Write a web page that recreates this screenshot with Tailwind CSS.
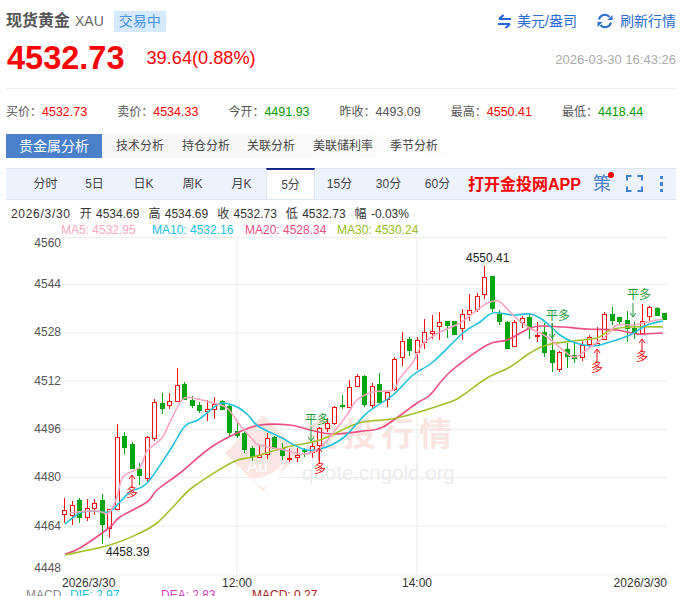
<!DOCTYPE html>
<html lang="zh-CN">
<head>
  <meta charset="UTF-8" />
  <title>现货黄金 XAU</title>
  <script src="https://cdn.jsdelivr.net/npm/@tailwindcss/browser@4"></script>
</head>
<body class="bg-white font-['Liberation_Sans','Noto_Sans_CJK_SC',sans-serif] text-[#555]">
<div class="h-[596px] w-[683px] overflow-hidden">

  <!-- cabecalho -->
  <div class="flex h-[42px] items-center pl-[6px] pr-[7px]">
    <span class="text-base font-bold text-[#555]">现货黄金</span>
    <span class="ml-[5px] text-sm text-[#666]">XAU</span>
    <span class="ml-[10px] flex h-[21px] w-[52px] items-center justify-center bg-[#d6e9fd] text-sm text-[#4a90e2]">交易中</span>
    <div class="ml-auto flex items-center text-sm text-[#2a6ccf]">
      <svg class="mr-[5px] size-[15px]" viewBox="0 0 15 15" fill="none" stroke="#2466d6" stroke-width="2.2">
        <path d="M14 5H2M6.5 1 2 5" />
        <path d="M1 10h12M8.5 14l4.5-4" />
      </svg>
      <span>美元/盎司</span>
      <svg class="ml-[20px] mr-[7px] size-[16px]" viewBox="0 0 16 16" fill="none" stroke="#2a6ccf" stroke-width="2">
        <path d="M2 6.5A6 6 0 0 1 12.5 4" />
        <path d="M14 9.5A6 6 0 0 1 3.5 12" />
        <path d="M15.5 2v5h-5zM.5 14V9h5z" fill="#2a6ccf" stroke="none" />
      </svg>
      <span>刷新行情</span>
    </div>
  </div>

  <!-- preco -->
  <div class="mx-[6px] mr-[7px] flex h-[47px] items-center border-b border-[#eee] pb-[13px] pl-px">
    <span class="text-[32.5px] leading-none font-bold text-[#f00]">4532.73</span>
    <span class="ml-[22px] text-[18.2px] text-[#f00]">39.64(0.88%)</span>
    <span class="mt-[2px] ml-auto text-[13px] text-[#aaa]">2026-03-30 16:43:26</span>
  </div>

  <div class="grid h-[44px] grid-cols-[repeat(6,111.2px)] items-center pl-[6px] pt-[2px] text-xs">
    <div>买价：<span class="text-[12.5px] text-[#f00]">4532.73</span></div>
    <div>卖价：<span class="text-[12.5px] text-[#f00]">4534.33</span></div>
    <div>今开：<span class="text-[12.5px] text-[#090]">4491.93</span></div>
    <div>昨收：<span class="text-[12.5px] text-[#555]">4493.09</span></div>
    <div>最高：<span class="text-[12.5px] text-[#f00]">4550.41</span></div>
    <div>最低：<span class="text-[12.5px] text-[#090]">4418.44</span></div>
  </div>

  <!-- abas analise -->
  <div class="mt-[1px] ml-[6px] flex h-[24px] w-[470px] items-center bg-gradient-to-r from-[#f7f7f7] via-[#f7f7f7] to-white text-xs text-[#444]">
    <span class="flex h-full w-[96px] items-center justify-center bg-[#4a7fc9] text-sm text-white">贵金属分析</span>
    <span class="ml-[14px]">技术分析</span>
    <span class="ml-[18px]">持仓分析</span>
    <span class="ml-[17px]">关联分析</span>
    <span class="ml-[18px]">美联储利率</span>
    <span class="ml-[17px]">季节分析</span>
  </div>

  <!-- barra do grafico -->
  <div class="mt-[10px] ml-[6px] flex h-[32px] w-[670px] items-stretch border-y border-[#dde6f3] bg-[#edf3fc] pl-[15px] text-xs text-[#444]">
    <span class="flex w-[49px] items-center justify-center">分时</span>
    <span class="flex w-[49px] items-center justify-center">5日</span>
    <span class="flex w-[49px] items-center justify-center">日K</span>
    <span class="flex w-[49px] items-center justify-center">周K</span>
    <span class="flex w-[49px] items-center justify-center">月K</span>
    <span class="-mt-px flex w-[49px] items-center justify-center border-x border-t-2 border-x-[#dde6f3] border-t-[#14298a] bg-white">5分</span>
    <span class="flex w-[49px] items-center justify-center">15分</span>
    <span class="flex w-[49px] items-center justify-center">30分</span>
    <span class="flex w-[49px] items-center justify-center">60分</span>
    <span class="ml-[6px] flex items-center pt-[1px] text-base font-bold text-[#f00]">打开金投网APP</span>
    <span class="relative ml-[12px] flex items-center text-lg text-[#4a7fc9]">策
      <span class="absolute top-[3px] right-[-3px] size-[6px] rounded-full bg-[#f00]"></span>
    </span>
    <svg class="mt-[6px] ml-[15px] size-[17px]" viewBox="0 0 17 17" fill="none" stroke="#3f7fd0" stroke-width="2">
      <path d="M1 5.5V1h4.5M11.5 1H16v4.5M16 11.5V16h-4.5M5.5 16H1v-4.5" />
    </svg>
    <div class="ml-[17px] flex flex-col justify-center gap-[3px]">
      <span class="size-[3.5px] bg-[#3f7fd0]"></span>
      <span class="size-[3.5px] bg-[#3f7fd0]"></span>
      <span class="size-[3.5px] bg-[#3f7fd0]"></span>
    </div>
  </div>

  <!-- dados candle -->
  <div class="flex h-[22px] items-end gap-[9px] pl-[11px] text-xs whitespace-nowrap text-[#333] [word-spacing:1px]">
    <span class="tracking-[0.7px]">2026/3/30</span><span>开 4534.69</span><span>高 4534.69</span><span>收 4532.73</span><span>低 4532.73</span><span>幅 -0.03%</span>
  </div>
  <div class="flex h-[15px] items-center pl-[61px] text-xs">
    <span class="w-[91px] text-[#ffa6c1]">MA5: 4532.95</span>
    <span class="w-[93px] text-[#22c1dc]">MA10: 4532.16</span>
    <span class="w-[92px] text-[#ec4f7f]">MA20: 4528.34</span>
    <span class="text-[#97bd1f]">MA30: 4530.24</span>
  </div>

  <!-- grafico: coordenadas da tela com origem em y=237 -->
  <svg id="chart" class="block" width="683" height="359" viewBox="0 237 683 359" font-size="12" fill="#555">
    <g stroke="#eee" stroke-width="1.2">
      <path d="M62 237.5H667M62 284.5H667M62 333H667M62 381H667M62 429.5H667M62 477.5H667M62 526H667M62 575H667" />
      <path d="M237 237V575M417 237V575" />
    </g>
    <g text-anchor="end" fill="#555">
      <text x="61" y="247">4560</text>
      <text x="61" y="288">4544</text>
      <text x="61" y="336">4528</text>
      <text x="61" y="385">4512</text>
      <text x="61" y="433">4496</text>
      <text x="61" y="481">4480</text>
      <text x="61" y="530">4464</text>
      <text x="61" y="572">4448</text>
    </g>

    <!-- marca d'agua -->
    <g>
      <path d="M263 415 301 453 263 491 225 453Z" fill="#fae6e2" />
      <text x="247" y="472" font-size="17" fill="#fff">Au</text>
      <path d="M250 479Q271 478 284 463Q279 482 263 488Q256 483 250 479Z" fill="#fff" />
      <text x="305" y="446" font-size="33" font-weight="700" letter-spacing="5" fill="#fae4df">金投行情</text>
      <text x="302" y="480" font-size="20.5" fill="#ececec">quote.cngold.org</text>
    </g>

    <g id="candles"></g>
    <g id="ma"></g>

    <!-- sinais -->
    <g font-size="12" font-family="'Noto Sans CJK SC',sans-serif">
      <g fill="#1f9a3a" stroke="none">
        <text x="305" y="424">平多</text>
        <text x="546" y="320">平多</text>
        <text x="627" y="299">平多</text>
      </g>
      <g fill="none" stroke="#1f9a3a" stroke-width="1">
        <path d="M311 426V441M308 437l3 4 3-4" />
        <path d="M552 323V338M549 334l3 4 3-4" />
        <path d="M633 303V317M630 313l3 4 3-4" />
      </g>
      <g fill="#f01010" stroke="none">
        <text x="314" y="473">多</text>
        <text x="126" y="497">多</text>
        <text x="591" y="372">多</text>
        <text x="636" y="361">多</text>
      </g>
      <g fill="none" stroke="#f01010" stroke-width="1">
        <path d="M319 448V461M316 452l3-4 3 4" />
        <path d="M132 475V488M129 479l3-4 3 4" />
        <path d="M597 349V363M594 353l3-4 3 4" />
        <path d="M642 339V352M639 343l3-4 3 4" />
      </g>
    </g>

    <g fill="#222">
      <text x="466" y="262">4550.41</text>
      <text x="106" y="556">4458.39</text>
    </g>
    <g fill="#333">
      <text x="62" y="587">2026/3/30</text>
      <text x="237" y="587" text-anchor="middle">12:00</text>
      <text x="417" y="587" text-anchor="middle">14:00</text>
      <text x="667" y="587" text-anchor="end">2026/3/30</text>
    </g>
    <g>
      <text x="26" y="599" fill="#888">MACD</text>
      <text x="70" y="599" fill="#22c1dc">DIF: 2.97</text>
      <text x="161" y="599" fill="#d63fc0">DEA: 2.83</text>
      <text x="252" y="599" fill="#a82020">MACD: 0.27</text>
    </g>
  </svg>
</div>

<script>
  // [pavio topo, corpo topo, corpo base, pavio base, 1 = alta]
  const data = [
    [498,510,514,523,1],[501,505,515,525,1],[498,500,517,523,0],[499,508,517,521,1],[499,503,508,515,1],
    [494,500,524,544,0],[509,509,528,538,1],[424,437,509,510,1],[432,436,447,454,0],[442,444,468,469,0],
    [463,469,475,485,0],[436,437,478,482,1],[399,402,438,441,1],[393,403,408,414,0],[393,401,405,409,1],
    [368,385,401,401,1],[382,384,399,399,0],[396,400,405,408,0],[402,405,410,413,0],[400,409,411,421,1],
    [397,404,409,419,1],[400,401,409,410,0],[405,406,432,437,0],[423,431,435,438,0],[430,433,449,453,0],
    [446,448,456,461,0],[446,455,457,458,1],[433,438,454,459,1],[436,437,448,449,0],[443,448,455,460,0],
    [449,458,459,462,1],[448,455,457,462,1],[448,450,451,457,0],[443,446,452,458,1],[427,428,445,463,1],
    [418,423,428,432,1],[406,407,423,425,1],[395,405,406,409,0],[380,387,407,408,1],[374,376,386,387,1],
    [375,376,404,407,0],[383,386,405,409,1],[373,384,402,402,0],[392,392,399,407,1],[357,359,389,391,1],
    [332,341,357,366,1],[337,339,350,356,0],[337,340,352,370,1],[319,332,342,349,1],[315,331,333,339,1],
    [312,322,326,340,1],[321,321,325,338,0],[321,321,334,335,0],[309,314,328,340,1],[294,310,314,321,1],
    [293,296,309,312,1],[266,277,294,299,1],[276,276,308,312,0],[310,314,321,325,0],[321,322,348,348,0],
    [320,322,346,347,1],[316,318,322,328,1],[313,317,328,339,0],[322,335,336,342,1],[323,332,352,357,0],
    [323,350,362,372,0],[351,352,369,372,1],[343,349,356,368,0],[343,355,358,363,0],[341,345,357,361,1],
    [335,337,344,347,1],[327,343,345,346,1],[312,314,339,340,1],[307,314,320,325,0],[317,317,321,325,0],
    [311,320,328,342,0],[322,328,333,339,0],[304,321,333,333,1],[306,307,316,322,1],[307,308,315,316,0],
    [313,313,319,320,0]
  ];
  const ma = [
    ['#ec4f7f', [65,554,80,548,110,527,120,517,147,502,157,490,180,473,210,448,237,433,260,425,290,425,310,430,333,434,363,431,383,427,417,403,430,395,450,372,487,345,507,340,528,329,540,326,563,327,587,329,617,330,637,334,663,333]],
    ['#a3c02b', [65,555,110,545,140,533,157,523,173,507,193,487,233,462,253,457,287,447,320,440,353,425,370,421,397,418,450,402,463,395,487,378,510,367,530,353,547,345,573,341,597,338,610,330,630,327,663,327]],
    ['#22c1dc', [65,524,80,513,95,511,109,512,120,502,130,492,147,483,170,450,185,426,198,420,213,408,222,403,237,407,248,415,258,426,280,437,303,449,320,449,343,438,367,413,393,395,413,375,433,362,463,333,480,322,493,313,513,315,530,314,543,320,560,335,573,342,593,346,610,342,630,335,647,325,663,321]],
    ['#ffa6c1', [70,513,87,511,98,511,109,513,117,497,123,477,140,467,147,451,162,438,170,422,183,399,197,399,213,403,227,408,240,425,253,440,259,445,280,449,303,454,320,448,333,433,347,415,357,400,373,392,393,390,400,378,413,362,422,345,438,333,460,323,477,310,490,302,500,302,513,315,528,327,547,337,563,350,575,357,593,345,607,335,617,325,633,325,647,322,663,319]]
  ];
  const ns = 'http://www.w3.org/2000/svg';
  function el(parent, tag, attrs) {
    const e = document.createElementNS(ns, tag);
    for (const k in attrs) e.setAttribute(k, attrs[k]);
    parent.appendChild(e);
  }
  const g = document.getElementById('candles');
  data.forEach((c, i) => {
    const x = Math.round(64.3 + 7.5 * i) + 0.5;
    const color = c[4] ? '#f01010' : '#00a510';
    el(g, 'line', { x1: x, x2: x, y1: c[0], y2: c[3], stroke: color, 'stroke-width': 1 });
    el(g, 'rect', {
      x: x - 2, y: c[1] + 0.5, width: 4, height: Math.max(c[2] - c[1], 1),
      fill: c[4] ? '#fff' : color, stroke: color, 'stroke-width': 1
    });
  });
  // curva suave entre os pontos
  function smooth(p) {
    const pt = i => { const j = Math.max(0, Math.min(i, p.length / 2 - 1)); return [p[j * 2], p[j * 2 + 1]]; };
    let d = 'M' + p[0] + ' ' + p[1];
    for (let i = 0; i < p.length / 2 - 1; i++) {
      const [a, b, c, e] = [pt(i - 1), pt(i), pt(i + 1), pt(i + 2)];
      d += 'C' + (b[0] + (c[0] - a[0]) / 6) + ' ' + (b[1] + (c[1] - a[1]) / 6) + ' ' +
        (c[0] - (e[0] - b[0]) / 6) + ' ' + (c[1] - (e[1] - b[1]) / 6) + ' ' + c[0] + ' ' + c[1];
    }
    return d;
  }
  const mg = document.getElementById('ma');
  ma.forEach(m => el(mg, 'path', { d: smooth(m[1]), fill: 'none', stroke: m[0], 'stroke-width': 1.6 }));
</script>
</body>
</html>
